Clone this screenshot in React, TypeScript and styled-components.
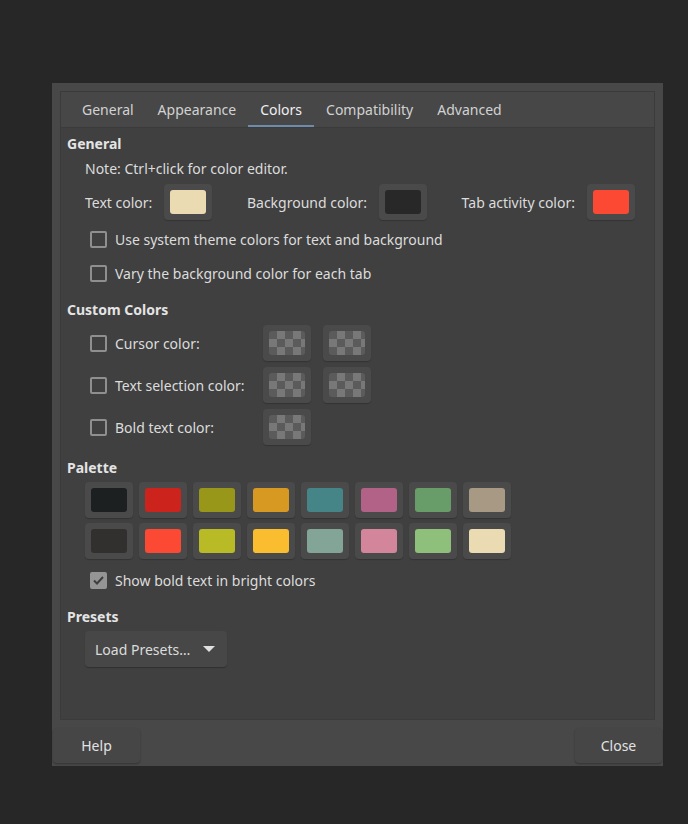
import styled, { createGlobalStyle } from 'styled-components';

const Global = createGlobalStyle`
  html, body {
    margin: 0;
    padding: 0;
    background: #272727;
  }
  body {
    font-family: "Noto Sans", "Open Sans", sans-serif;
    font-size: 14px;
    color: #dcdcdc;
  }
`;

const Page = styled.div`
  width: 688px;
  height: 824px;
  padding: 83px 0 0 52px;
  box-sizing: border-box;
`;

const Dialog = styled.div`
  width: 611px;
  height: 683px;
  background: #484848;
  display: flex;
  flex-direction: column;
  box-sizing: border-box;
  padding: 8px 8px 0 8px;
`;

const Notebook = styled.div`
  flex: 1;
  display: flex;
  flex-direction: column;
  border: 1px solid #3b3b3b;
  background: #404040;
`;

const TabBar = styled.div`
  height: 35px;
  display: flex;
  align-items: stretch;
  padding-left: 9px;
  background: #474747;
  border-bottom: 1px solid #3b3b3b;
`;

const Tab = styled.div<{ active?: boolean }>`
  padding: 0 12px;
  display: flex;
  align-items: center;
  color: ${({ active }) => (active ? '#f0f0f0' : '#d2d2d2')};
  box-shadow: ${({ active }) => (active ? 'inset 0 -2px 0 #6d8cab' : 'none')};
`;

const Content = styled.div`
  flex: 1;
  padding: 6px 0 0 6px;
  display: flex;
  flex-direction: column;
`;

const Heading = styled.div<{ top?: number }>`
  font-weight: bold;
  color: #e4e4e4;
  height: 20px;
  line-height: 20px;
  margin-top: ${({ top }) => top ?? 0}px;
`;

const Note = styled.div`
  margin: 5px 0 0 18px;
  height: 20px;
  line-height: 20px;
`;

const ColorRow = styled.div`
  display: flex;
  justify-content: space-between;
  margin: 5px 19px 0 18px;
`;

const ColorGroup = styled.div`
  display: flex;
  align-items: center;
  gap: 12px;
`;

const SwatchButton = styled.div`
  width: 48px;
  height: 36px;
  box-sizing: border-box;
  padding: 6px;
  background: #4a4a4a;
  border-radius: 4px;
  box-shadow: 0 1px 1px rgba(0, 0, 0, 0.2);
`;

const Swatch = styled.div<{ color: string }>`
  width: 100%;
  height: 100%;
  border-radius: 3px;
  background: ${({ color }) => color};
`;

const Checker = styled.div`
  width: 100%;
  height: 100%;
  border-radius: 3px;
  background-color: #5b5b5b;
  background-image: repeating-conic-gradient(#787878 0% 25%, #5b5b5b 0% 50%);
  background-size: 16px 16px;
`;

const CheckRow = styled.label<{ top?: number }>`
  display: flex;
  align-items: center;
  gap: 8px;
  margin: ${({ top }) => top ?? 0}px 0 0 23px;
  height: 20px;
`;

const Box = styled.span<{ checked?: boolean }>`
  width: 17px;
  height: 17px;
  box-sizing: border-box;
  border-radius: 2px;
  border: 2px solid ${({ checked }) => (checked ? '#959595' : '#8f8f8f')};
  background: ${({ checked }) => (checked ? '#959595' : 'transparent')};
  display: flex;
  align-items: center;
  justify-content: center;
`;

const CustomGrid = styled.div`
  display: grid;
  grid-template-columns: 161px 48px 48px;
  column-gap: 12px;
  row-gap: 6px;
  margin: 5px 0 0 23px;
  align-items: center;
`;

const CustomLabel = styled.div`
  display: flex;
  align-items: center;
  gap: 8px;
`;

const PaletteGrid = styled.div`
  display: grid;
  grid-template-columns: repeat(8, 48px);
  column-gap: 6px;
  row-gap: 5px;
  margin: 4px 0 0 18px;
`;

const DropButton = styled.div`
  margin: 4px 0 0 18px;
  width: 142px;
  height: 36px;
  box-sizing: border-box;
  padding: 0 10px;
  display: flex;
  align-items: center;
  justify-content: space-between;
  background: #474747;
  border-radius: 4px;
  box-shadow: 0 1px 1px rgba(0, 0, 0, 0.25);
`;

const Arrow = styled.span`
  width: 0;
  height: 0;
  border-left: 6px solid transparent;
  border-right: 6px solid transparent;
  border-top: 6px solid #e0e0e0;
  margin-right: 2px;
`;

const Actions = styled.div`
  height: 46px;
  display: flex;
  justify-content: space-between;
  align-items: flex-start;
  margin: 0 -7px;
  padding-top: 8px;
  box-sizing: border-box;
`;

const ActionButton = styled.div`
  width: 87px;
  height: 35px;
  display: flex;
  align-items: center;
  justify-content: center;
  background: #464646;
  border-radius: 4px;
  box-shadow: 0 1px 2px rgba(0, 0, 0, 0.3);
  color: #e2e2e2;
`;

const tabs = ['General', 'Appearance', 'Colors', 'Compatibility', 'Advanced'];
const palette = [
  '#1d2021', '#cc241d', '#98971a', '#d79921', '#458588', '#b16286', '#689d6a', '#a89984',
  '#32302f', '#fb4934', '#b8bb26', '#fabd2f', '#83a598', '#d3869b', '#8ec07c', '#ebdbb2',
];

const Check = ({ checked }: { checked?: boolean }) => (
  <Box checked={checked}>
    {checked && (
      <svg width="13" height="13" viewBox="0 0 13 13">
        <path d="M2 6.5 L5 9.5 L11 3" fill="none" stroke="#3e3e3e" strokeWidth="2" />
      </svg>
    )}
  </Box>
);

export default function App() {
  return (
    <Page>
      <Global />
      <Dialog>
        <Notebook>
          <TabBar>
            {tabs.map((t) => (
              <Tab key={t} active={t === 'Colors'}>{t}</Tab>
            ))}
          </TabBar>
          <Content>
            <Heading>General</Heading>
            <Note>Note: Ctrl+click for color editor.</Note>
            <ColorRow>
              <ColorGroup>
                Text color:
                <SwatchButton><Swatch color="#ebdbb2" /></SwatchButton>
              </ColorGroup>
              <ColorGroup>
                Background color:
                <SwatchButton><Swatch color="#282828" /></SwatchButton>
              </ColorGroup>
              <ColorGroup>
                Tab activity color:
                <SwatchButton><Swatch color="#fb4934" /></SwatchButton>
              </ColorGroup>
            </ColorRow>
            <CheckRow top={9}><Check />Use system theme colors for text and background</CheckRow>
            <CheckRow top={14}><Check />Vary the background color for each tab</CheckRow>
            <Heading top={17}>Custom Colors</Heading>
            <CustomGrid>
              <CustomLabel><Check />Cursor color:</CustomLabel>
              <SwatchButton><Checker /></SwatchButton>
              <SwatchButton><Checker /></SwatchButton>
              <CustomLabel><Check />Text selection color:</CustomLabel>
              <SwatchButton><Checker /></SwatchButton>
              <SwatchButton><Checker /></SwatchButton>
              <CustomLabel><Check />Bold text color:</CustomLabel>
              <SwatchButton><Checker /></SwatchButton>
            </CustomGrid>
            <Heading top={13}>Palette</Heading>
            <PaletteGrid>
              {palette.map((c, i) => (
                <SwatchButton key={i}><Swatch color={c} /></SwatchButton>
              ))}
            </PaletteGrid>
            <CheckRow top={11}><Check checked />Show bold text in bright colors</CheckRow>
            <Heading top={17}>Presets</Heading>
            <DropButton>Load Presets… <Arrow /></DropButton>
          </Content>
        </Notebook>
        <Actions>
          <ActionButton>Help</ActionButton>
          <ActionButton>Close</ActionButton>
        </Actions>
      </Dialog>
    </Page>
  );
}
